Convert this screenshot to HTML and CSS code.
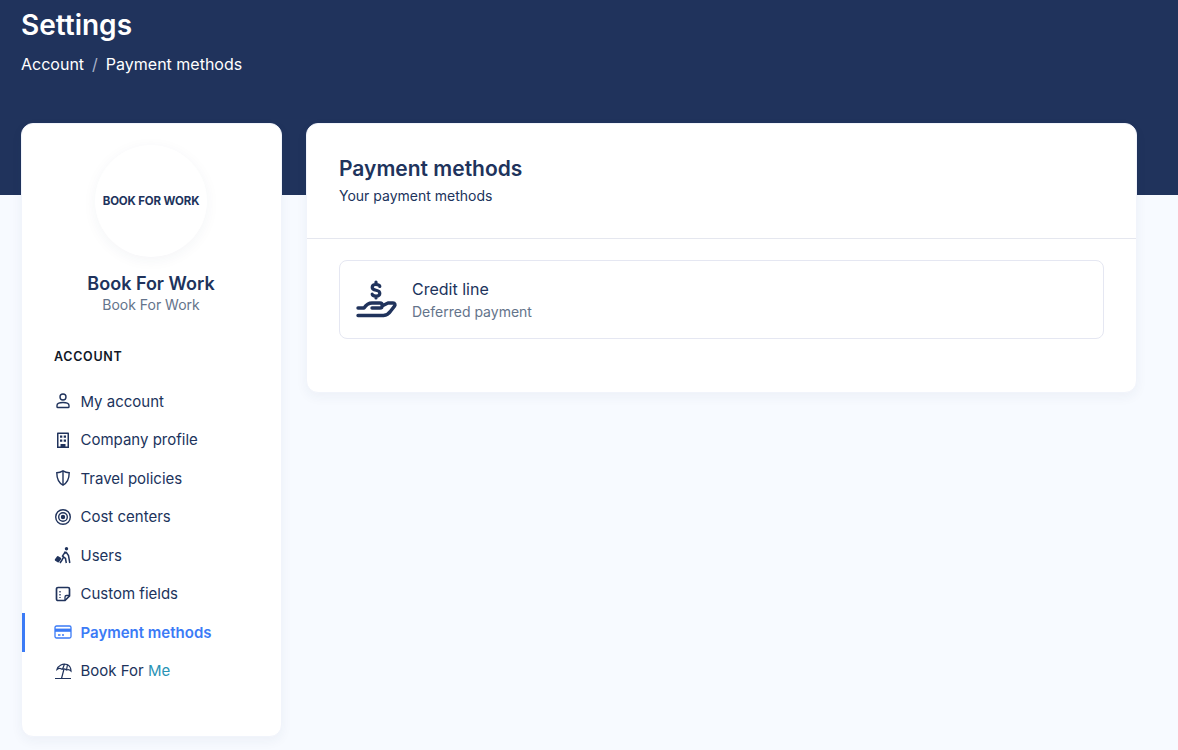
FILE: index.html
```html
<!DOCTYPE html>
<html>
	<head>
		<title>Settings</title>
		<link rel="stylesheet" href="styles.css">
	</head>
	<body>
		<header class="banner">
			<h1>Settings</h1>
			<div class="crumbs">
				<span>Account</span><span class="sep">/</span><span>Payment methods</span>
			</div>
		</header>
		<main class="layout">
			<aside class="side">
				<div class="logo"><span class="logo-text">BOOK FOR WORK</span></div>
				<div class="org-name">Book For Work</div>
				<div class="org-sub">Book For Work</div>
				<div class="side-title">ACCOUNT</div>
				<nav class="menu">
					<a class="item">
						<svg viewBox="0 0 18 18" fill="none" stroke="currentColor" stroke-width="1.4"><circle cx="9" cy="5" r="3"/><path d="M3 13.5c0-2 2-3 6-3s6 1 6 3v1.200c0 .5-.3.8-.8.8H3.800c-.5 0-.8-.3-.8-.8z"/></svg>
						My account
					</a>
					<a class="item">
						<svg viewBox="0 0 18 18"><path fill="currentColor" d="M4 1.500h10c.6 0 1 .4 1 1V17H3V2.500c0-.6.4-1 1-1z"/><path fill="#fff" d="M4.500 3h9v12.500h-2V13h-5v2.500h-2z"/><path fill="currentColor" d="M6 4.500h2.300v2.300H6zM9.700 4.500H12v2.300H9.700zM6 8.500h2.300v2.300H6zM9.700 8.500H12v2.300H9.700z"/></svg>
						Company profile
					</a>
					<a class="item">
						<svg viewBox="0 0 18 18" fill="none" stroke="currentColor" stroke-width="1.4"><path d="M9 1.800c2 1.200 4 1.800 6.200 1.900 0 5.500-1.800 10-6.200 12.500C4.600 13.700 2.800 9.200 2.800 3.700 5 3.600 7 3 9 1.800z"/><path d="M9 2v14"/></svg>
						Travel policies
					</a>
					<a class="item">
						<svg viewBox="0 0 18 18" fill="none" stroke="currentColor" stroke-width="1.400"><circle cx="9" cy="9" r="7.300"/><circle cx="9" cy="9" r="4.300"/><circle cx="9" cy="9" r="1.500" fill="currentColor"/></svg>
						Cost centers
					</a>
					<a class="item">
						<svg viewBox="0 0 18 18"><circle cx="12.500" cy="2.800" r="1.700" fill="currentColor"/><path fill="none" stroke="currentColor" stroke-width="1.500" d="M11.500 5.500 8.500 10l3 2.500.8 4.500M9.500 11 8 14l-2 3M12 6l2.500 3.500 1.300 7.500M12 6.500 9.500 8"/><rect x="1.500" y="10.500" width="5" height="5.500" rx="1" fill="currentColor" transform="rotate(35 4 13.250)"/></svg>
						Users
					</a>
					<a class="item">
						<svg viewBox="0 0 18 18" fill="none" stroke="currentColor" stroke-width="1.700"><path d="M4 2.500h10c.8 0 1.500.7 1.500 1.500v7l-4.500 4.500H4c-.8 0-1.500-.7-1.500-1.500V4c0-.8.700-1.500 1.500-1.500z"/><path stroke-width="1.300" d="M15.500 10.500h-3c-.8 0-1.500.7-1.500 1.500v3.500"/><path stroke-width="1.300" stroke-dasharray="1.500 1.500" d="M6 6v7"/></svg>
						Custom fields
					</a>
					<a class="item active">
						<svg viewBox="0 0 18 18" fill="none" stroke="currentColor" stroke-width="1.300"><rect x="1" y="3" width="16" height="12" rx="1.500"/><path stroke-width="3.200" d="M1 7.200h16"/><path d="M4 12h2.500M8 12h2"/></svg>
						Payment methods
					</a>
					<a class="item">
						<svg viewBox="0 0 18 18" fill="none" stroke="currentColor" stroke-width="1.200"><path d="M1 16.500h16M7.500 16.500 10 7"/><path d="M3 7.500C4 3.500 9 1 13 2.500c2.500 1 4 3.500 4 6.500-1.500-1.500-3-1.800-4.500-1-1.500-1.200-3-1.500-4.500-.7-1.500-1-3.500-1-5 .2z"/><path d="M8.500 7.300 10.500 2M12.500 8l1-5.500"/></svg>
						<span>Book For <span class="me">Me</span></span>
					</a>
				</nav>
			</aside>
			<section class="panel">
				<div class="panel-head">
					<h2>Payment methods</h2>
					<p>Your payment methods</p>
				</div>
				<div class="panel-body">
					<div class="method">
						<svg class="method-icon" viewBox="0 0 42 40" fill="none" stroke="currentColor" stroke-linecap="round" stroke-linejoin="round">
							<path stroke-width="3.200" d="M23.800 6.500c0-1-1.500-2-3.800-2s-3.800 1-3.800 2.800 1.600 2.600 3.800 3 3.800 1.200 3.800 3-1.500 2.800-3.800 2.800-3.800-1-3.800-2M20 2v2.500M20 16v2"/>
							<path stroke-width="3.400" d="M2 28h6c2-3 5-5 8-5h8c3 0 3 5 0 5h-8M26 26l6-3h5c2 0 2.500 2 1.500 3.200l-4 5c-2 3-4 4-7 4.300H2"/>
						</svg>
						<div>
							<div class="method-name">Credit line</div>
							<div class="method-sub">Deferred payment</div>
						</div>
					</div>
				</div>
			</section>
		</main>
	</body>
</html>
```

FILE: styles.css
```css
html {
	box-sizing: border-box;
	font-family: Inter, sans-serif;
}

body {
	margin: 0;
	height: 750px;
	overflow: hidden;
	background: #f7faff;
	color: #20335c;
}

.banner {
	background: #20335c;
	height: 195px;
	box-sizing: border-box;
	padding: 9px 21px 0;
	color: #fff;
}

.banner h1 {
	margin: 0;
	font-size: 28px;
	line-height: 33px;
	font-weight: 600;
}

.crumbs {
	margin-top: 11px;
	font-size: 16px;
	line-height: 22px;
	font-weight: 400;
}

.crumbs .sep {
	margin: 0 8px;
	color: #a9b4c9;
}

.layout {
	display: flex;
	align-items: flex-start;
	gap: 24px;
	margin: -72px 41px 0 21px;
}

.side {
	width: 261px;
	height: 614px;
	box-sizing: border-box;
	flex-shrink: 0;
	padding: 21px 1px 0 0;
	background: #fff;
	border: 1px solid #f1f4fb;
	border-radius: 12px;
	box-shadow: 0 4px 12px rgba(32, 51, 92, 0.05);
	text-align: center;
}

.logo {
	width: 112px;
	height: 112px;
	margin: 0 auto;
	border-radius: 50%;
	background: #fff;
	box-shadow: 0 3px 14px rgba(32, 51, 92, 0.05);
	display: flex;
	align-items: center;
	justify-content: center;
}

.logo-text {
	font-size: 11.500px;
	font-weight: 700;
	letter-spacing: -0.15px;
	white-space: nowrap;
}

.org-name {
	margin-top: 16px;
	font-size: 18px;
	line-height: 22px;
	font-weight: 600;
}

.org-sub {
	margin-top: 1px;
	font-size: 14px;
	line-height: 18px;
	color: #64748b;
}

.side-title {
	margin-top: 35px;
	padding-left: 32px;
	text-align: left;
	font-size: 12.500px;
	line-height: 16px;
	font-weight: 600;
	letter-spacing: 0.7px;
	color: #111827;
}

.menu {
	margin-top: 17px;
	text-align: left;
}

.item {
	display: flex;
	align-items: center;
	gap: 8.500px;
	height: 38.500px;
	padding-left: 29px;
	border-left: 3px solid transparent;
	font-size: 15px;
}

.item svg {
	width: 18px;
	height: 18px;
	flex-shrink: 0;
}

.item.active {
	color: #3b7bf6;
	font-weight: 600;
	border-left-color: #3b7bf6;
}

.me {
	color: #2a93b5;
}

.panel {
	flex: 1;
	height: 270px;
	box-sizing: border-box;
	background: #fff;
	border: 1px solid #f1f4fb;
	border-radius: 12px;
	box-shadow: 0 4px 12px rgba(32, 51, 92, 0.05);
}

.panel-head {
	height: 115px;
	box-sizing: border-box;
	padding: 31px 32px 0;
	border-bottom: 1px solid #e5e7ef;
}

.panel-head h2 {
	margin: 0;
	font-size: 21px;
	line-height: 27px;
	font-weight: 600;
}

.panel-head p {
	margin: 5px 0 0;
	font-size: 14px;
	line-height: 18px;
}

.panel-body {
	padding: 21px 32px 0;
}

.method {
	display: flex;
	align-items: center;
	gap: 14px;
	height: 79px;
	box-sizing: border-box;
	padding-left: 16px;
	border: 1px solid #e5e7f2;
	border-radius: 8px;
}

.method-icon {
	width: 42px;
	height: 40px;
}

.method-name {
	font-size: 16px;
	line-height: 22px;
}

.method-sub {
	margin-top: 3px;
	font-size: 14px;
	line-height: 18px;
	color: #64748b;
}
```
